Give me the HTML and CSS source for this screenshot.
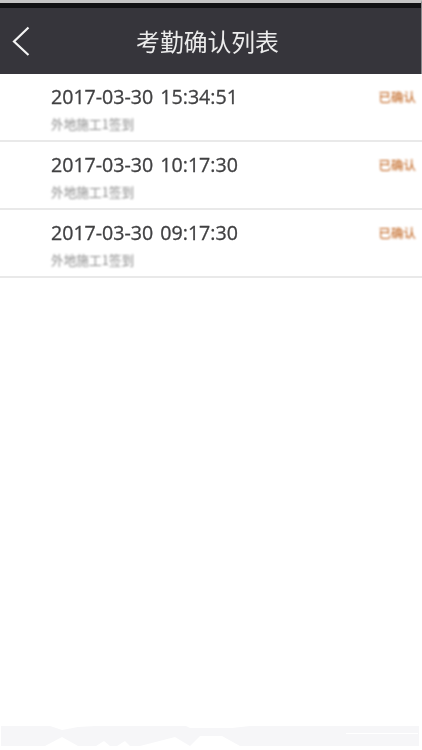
FILE: index.html
```html
<!DOCTYPE html>
<html lang="zh">
<head>
<meta charset="utf-8">
<title>考勤确认列表</title>
<link rel="stylesheet" href="styles.css">
</head>
<body>
<div class="page">
  <header class="header">
    <svg class="back" viewBox="0 0 20 30" width="20" height="30" aria-hidden="true"><path d="M17.5 1.5 3 15.5 17.5 29" fill="none" stroke="#f4f4f4" stroke-width="2.2"/></svg>
    <h1 class="title">考勤确认列表</h1>
  </header>
  <ul class="list">
    <li class="row">
      <div class="info"><div class="time">2017-03-30 15:34:51</div><div class="desc">外地施工1签到</div></div>
      <span class="status">已确认</span>
    </li>
    <li class="row">
      <div class="info"><div class="time">2017-03-30 10:17:30</div><div class="desc">外地施工1签到</div></div>
      <span class="status">已确认</span>
    </li>
    <li class="row">
      <div class="info"><div class="time">2017-03-30 09:17:30</div><div class="desc">外地施工1签到</div></div>
      <span class="status">已确认</span>
    </li>
  </ul>
  <svg class="footer" viewBox="0 0 422 24" width="422" height="24" preserveAspectRatio="none" aria-hidden="true"><path d="M1 3H50L62 7 78 4 95 3H186L190 5H205L232 5 250 3H419V23H240L222 13 200 13 190 23 175 14 140 23H130L125 18 117 23H110L104 18 96 23H78L62 14 45 23H1Z" fill="#f6f6f8"/><path d="M346 10H418V11H346Z" fill="#fff"/></svg>
</div>
</body>
</html>
```
FILE: styles.css
```css
* { box-sizing: border-box; }
html, body { margin: 0; padding: 0; background: #fff; }
.page {
  width: 422px;
  height: 750px;
  display: flex;
  flex-direction: column;
  overflow: hidden;
  font-family: "Noto Sans CJK SC", "Open Sans", sans-serif;
}
.header {
  height: 74px;
  padding: 8px 6px 0 0;
  display: flex;
  align-items: center;
  justify-content: center;
  position: relative;
  background: #36353b;
  border-top: 3px solid #c4c4c4;
  box-shadow: inset 0 5px 0 #111113;
  border-right: 1px solid #8b8b8e;
}
.back { position: absolute; left: 11px; top: 23px; filter: blur(0.5px); }
.title {
  margin: 0 0 5px;
  font-size: 23.8px;
  font-weight: 400;
  color: #ececec;
  filter: blur(0.7px);
}
.list { margin: 0; padding: 0; list-style: none; }
.row {
  height: 68px;
  padding: 0 6px 0 51px;
  display: flex;
  justify-content: space-between;
  border-bottom: 2px solid #e9e9e9;
}
.info { display: flex; flex-direction: column; }
.time {
  font-family: "Open Sans", sans-serif;
  font-size: 19.6px;
  word-spacing: 2px;
  -webkit-text-stroke: 0.3px #404042;
  line-height: 24px;
  margin-top: 11px;
  color: #404042;
  filter: blur(0.7px);
}
.desc {
  font-size: 12.7px;
  line-height: 16px;
  margin-top: 7px;
  color: #8c8c8c;
  filter: blur(0.85px);
}
.status {
  font-size: 12.5px;
  line-height: 16px;
  margin-top: 15px;
  color: #bb5509;
  filter: blur(0.8px);
}
.footer { margin-top: auto; margin-bottom: 3px; flex: none; }
```
